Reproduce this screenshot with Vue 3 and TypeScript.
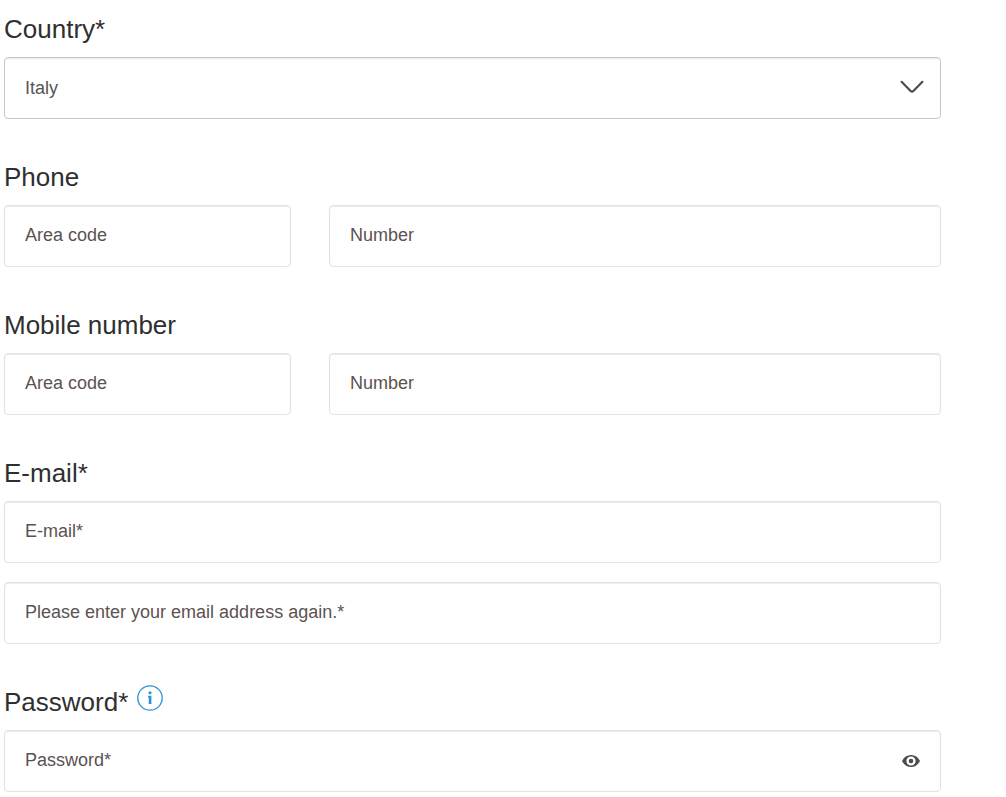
<script setup lang="ts">
import { reactive, ref } from 'vue'

const countries: string[] = ['Italy', 'Austria', 'France', 'Germany', 'Switzerland']

const form = reactive({
  country: 'Italy',
  phoneCode: '',
  phoneNumber: '',
  mobileCode: '',
  mobileNumber: '',
  email: '',
  emailAgain: '',
  password: '',
})

const showPassword = ref(false)
</script>

<template>
  <form class="form" @submit.prevent>
    <section class="group">
      <label class="title" for="country">Country*</label>
      <div class="field">
        <select id="country" v-model="form.country" class="control select">
          <option v-for="c in countries" :key="c" :value="c">{{ c }}</option>
        </select>
        <svg class="chevron" viewBox="0 0 24 14" aria-hidden="true">
          <path d="M1.6 1.8 L10.6 11 Q12 12.4 13.4 11 L22.4 1.8" />
        </svg>
      </div>
    </section>

    <section class="group">
      <h2 id="phone" class="title">Phone</h2>
      <div class="pair" role="group" aria-labelledby="phone">
        <input v-model="form.phoneCode" class="control" type="tel" aria-label="Area code" placeholder="Area code" />
        <input v-model="form.phoneNumber" class="control" type="tel" aria-label="Number" placeholder="Number" />
      </div>
    </section>

    <section class="group">
      <h2 id="mobile" class="title">Mobile number</h2>
      <div class="pair" role="group" aria-labelledby="mobile">
        <input v-model="form.mobileCode" class="control" type="tel" aria-label="Area code" placeholder="Area code" />
        <input v-model="form.mobileNumber" class="control" type="tel" aria-label="Number" placeholder="Number" />
      </div>
    </section>

    <section class="group">
      <label class="title" for="email">E-mail*</label>
      <div class="stack">
        <input id="email" v-model="form.email" class="control" type="email" placeholder="E-mail*" />
        <input
          v-model="form.emailAgain"
          class="control"
          type="email"
          aria-label="Please enter your email address again.*"
          placeholder="Please enter your email address again.*"
        />
      </div>
    </section>

    <section class="group">
      <div class="heading">
        <label class="title" for="password">Password*</label>
        <button class="icon-button" type="button" aria-label="Password information">
          <svg class="info" viewBox="0 0 26 26" aria-hidden="true">
            <circle cx="13" cy="13" r="12.2" fill="none" stroke="currentColor" stroke-width="1.3" />
            <rect x="11.6" y="6.4" width="2.8" height="2.8" rx="0.8" fill="currentColor" />
            <path d="M11 10.8 H14.4 V19 H11.7 V12.2 H11 Z" fill="currentColor" />
          </svg>
        </button>
      </div>
      <div class="field">
        <input
          id="password"
          v-model="form.password"
          class="control with-icon"
          :type="showPassword ? 'text' : 'password'"
          placeholder="Password*"
        />
        <button class="icon-button reveal" type="button" aria-label="Show password" @click="showPassword = !showPassword">
          <svg class="eye" viewBox="0 0 18 12" aria-hidden="true">
            <path
              fill="currentColor"
              fill-rule="evenodd"
              d="M0 6 C1.8 2.2 5 0 9 0 S16.2 2.2 18 6 C16.2 9.8 13 12 9 12 S1.8 9.8 0 6 Z M9 1.4 A4.6 4.6 0 1 0 9 10.6 A4.6 4.6 0 1 0 9 1.4 Z"
            />
            <circle cx="9" cy="6" r="2.3" fill="currentColor" />
          </svg>
        </button>
      </div>
    </section>
  </form>
</template>

<style>
body {
  margin: 0;
  background: #fff;
}
</style>

<style scoped>
.form {
  display: flex;
  flex-direction: column;
  gap: 41px;
  padding: 12px 65px 4px 4px;
  font-family: "Liberation Sans", Arial, sans-serif;
  color: #2f2f31;
}

.group {
  display: flex;
  flex-direction: column;
  gap: 11px;
}

.title {
  margin: 0;
  font-size: 26px;
  font-weight: 400;
  line-height: 34px;
}

.heading {
  display: flex;
  align-items: flex-start;
  gap: 9px;
  height: 34px;
}

.pair {
  display: grid;
  grid-template-columns: 287fr 612fr;
  gap: 38px;
}

.stack {
  display: flex;
  flex-direction: column;
  gap: 19px;
}

.field {
  position: relative;
}

.control {
  display: block;
  box-sizing: border-box;
  width: 100%;
  min-width: 0;
  height: 62px;
  margin: 0;
  padding: 0 20px 2px;
  border: 1px solid #e2e2e2;
  border-radius: 4px;
  background: #fff;
  box-shadow: inset 0 1px 1px rgba(0, 0, 0, 0.08);
  color: #555;
  font-family: inherit;
  font-size: 18px;
  line-height: 24px;
  outline: none;
}

.control:focus {
  border-color: #2a94d6;
}

.control::placeholder {
  color: #5c5252;
  opacity: 1;
}

.select {
  appearance: none;
  padding-bottom: 0;
  border-color: #c8c8c8;
}

.with-icon {
  padding-right: 56px;
}

.chevron {
  position: absolute;
  top: 23px;
  right: 17px;
  width: 24px;
  height: 14px;
  fill: none;
  stroke: #4c4c4c;
  stroke-width: 2.2;
  stroke-linecap: round;
  pointer-events: none;
}

.icon-button {
  display: flex;
  padding: 0;
  border: 0;
  background: none;
  cursor: pointer;
}

.info {
  width: 26px;
  height: 26px;
  color: #2a94d6;
}

.reveal {
  position: absolute;
  top: 25px;
  right: 21px;
  color: #4c4c50;
}

.eye {
  width: 18px;
  height: 12px;
}
</style>
